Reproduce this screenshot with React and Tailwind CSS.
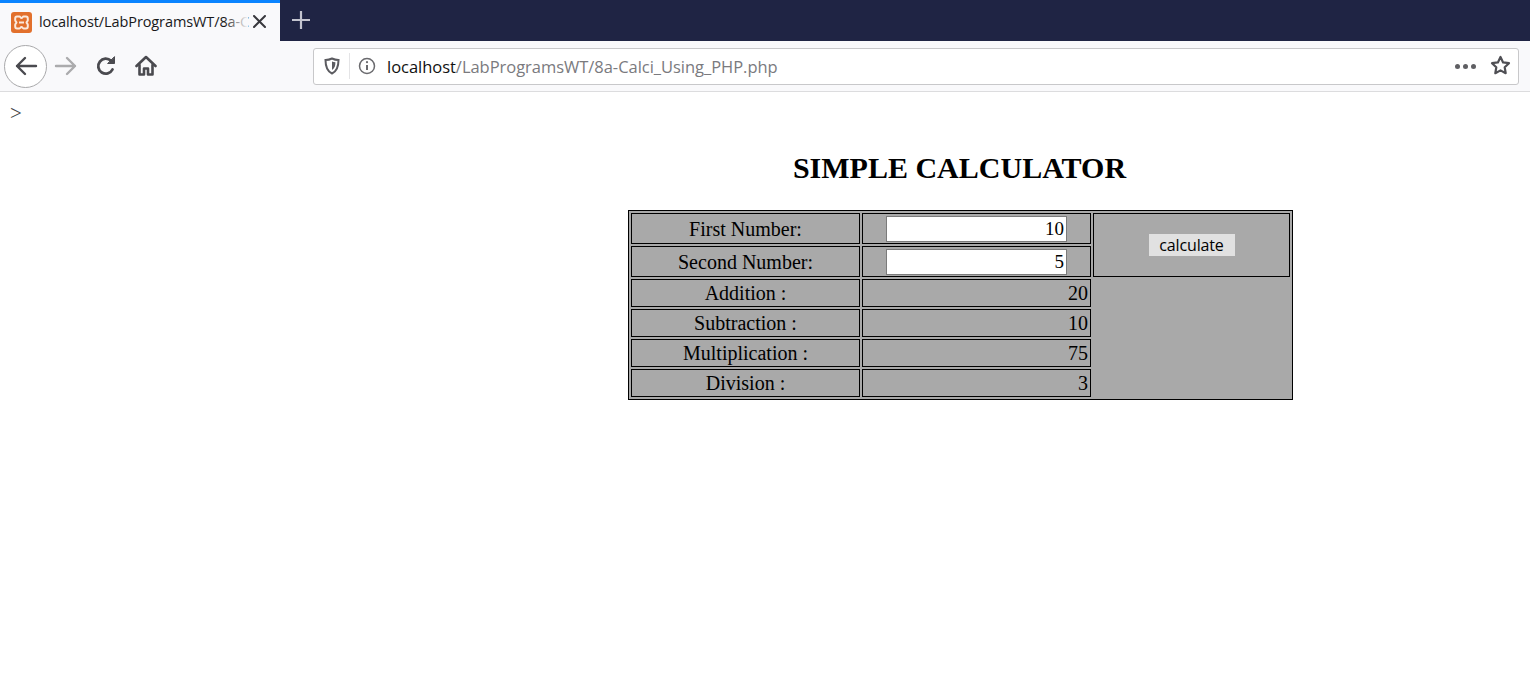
const rows = [
  ["Addition :", "20"],
  ["Subtraction :", "10"],
  ["Multiplication :", "75"],
  ["Division :", "3"],
];

function XamppLogo() {
  return (
    <svg width="21" height="21" viewBox="0 0 21 21">
      <rect x="0" y="0" width="21" height="21" rx="3" fill="#e2702c" />
      <path
        d="M6 4.500h2.500c.9 0 1 1.500 2 1.500s1.100-1.500 2-1.500H15c1.200 0 1.800 1 1.800 2.200v1.600c0 1-1.300 1.300-1.300 2.200s1.300 1.200 1.300 2.200v1.600c0 1.200-.6 2.200-1.800 2.200h-2.500c-.9 0-1-1.500-2-1.500s-1.100 1.500-2 1.500H6c-1.200 0-1.800-1-1.800-2.200v-1.600c0-1 1.300-1.300 1.300-2.200S4.200 9.300 4.200 8.300V6.700C4.200 5.500 4.800 4.500 6 4.500z"
        fill="none"
        stroke="#fbe9dc"
        strokeWidth="2"
      />
      <path d="M8 10.500h5" stroke="#fbe9dc" strokeWidth="2" />
    </svg>
  );
}

function ToolbarIcons() {
  return (
    <div className="flex items-center">
      <div className="ml-1 flex h-[43px] w-[43px] items-center justify-center rounded-full border border-[#a9a9ab] bg-white">
        <svg width="24" height="24" viewBox="0 0 24 24" fill="none" stroke="#4a4a4f" strokeWidth="2.400" strokeLinecap="round" strokeLinejoin="round">
          <path d="M22 12H3M11 4l-8 8 8 8" />
        </svg>
      </div>
      <svg className="ml-[7px]" width="24" height="24" viewBox="0 0 24 24" fill="none" stroke="#ababad" strokeWidth="2.400" strokeLinecap="round" strokeLinejoin="round">
        <path d="M2 12h19M13 4l8 8-8 8" />
      </svg>
      <svg className="ml-[17px]" width="22" height="22" viewBox="0 0 22 22" fill="none" stroke="#4a4a4f" strokeWidth="2.800" strokeLinecap="round">
        <path d="M17.500 14.500A7.500 7.500 0 1 1 16 5.800" />
        <path d="M19.500 2v6.500H13z" fill="#4a4a4f" strokeWidth="1" strokeLinejoin="round" />
      </svg>
      <svg className="ml-[18px]" width="22" height="22" viewBox="0 0 22 22" fill="none" stroke="#4a4a4f" strokeWidth="2.600" strokeLinejoin="round" strokeLinecap="round">
        <path d="M1.500 11 11 2l9.500 9" />
        <path d="M4.500 10v9.500h4.500v-6h4v6h4.500V10" />
      </svg>
    </div>
  );
}

function UrlBar() {
  return (
    <div className="ml-[156px] flex h-[37px] w-[1206px] items-center rounded-[3px] border border-[#c8c8ca] bg-white font-['Open_Sans',sans-serif]">
      <svg className="ml-[9px]" width="18" height="18" viewBox="0 0 18 18" fill="none" stroke="#5b5b60" strokeWidth="2">
        <path d="M9 1.500c2 1 4.300 1.500 6.500 1.500 0 6-1 11-6.500 13.500C3.500 14 2.500 9 2.500 3 4.700 3 7 2.500 9 1.500z" />
        <path d="M9 4.500c1 .4 2.200.7 3.400.8 0 3.500-.6 6-3.400 7.700z" fill="#5b5b60" stroke="none" />
      </svg>
      <div className="ml-[8px] h-[26px] w-px bg-[#e4e4e6]" />
      <svg className="ml-[8px]" width="18" height="18" viewBox="0 0 18 18" fill="none" stroke="#6a6a6e" strokeWidth="1.500">
        <circle cx="9" cy="9" r="7.500" />
        <path d="M9 8v5" strokeWidth="2" />
        <circle cx="9" cy="5.200" r="1.100" fill="#6a6a6e" stroke="none" />
      </svg>
      <div className="ml-[11px] whitespace-nowrap pt-[2px] text-[16.500px] tracking-[-0.03px] text-[#7a7a7e]">
        <span className="text-[#111]">localhost</span>/LabProgramsWT/8a-Calci_Using_PHP.php
      </div>
      <div className="ml-auto mr-[42px] flex gap-[3px]">
        <span className="h-[5px] w-[5px] rounded-full bg-[#5f5f63]" />
        <span className="h-[5px] w-[5px] rounded-full bg-[#5f5f63]" />
        <span className="h-[5px] w-[5px] rounded-full bg-[#5f5f63]" />
      </div>
      <svg className="absolute left-[1490px] top-[55px]" width="21" height="21" viewBox="0 0 21 21" fill="none" stroke="#4f4f54" strokeWidth="2.200" strokeLinejoin="round">
        <path d="m10.500 2 2.600 5.400 5.900.8-4.300 4.100 1 5.900-5.200-2.800-5.200 2.800 1-5.900L2 8.200l5.900-.8z" />
      </svg>
    </div>
  );
}

function LabelCell({ children }) {
  return <td className="border border-black text-center">{children}</td>;
}

function NumberInput({ value }) {
  return (
    <input
      readOnly
      value={value}
      className="mx-auto block h-[26px] w-[181px] border border-[#7b7b7b] bg-white pr-[2px] pt-[1px] text-right font-['Liberation_Serif',serif] text-[19px] text-black outline-none"
    />
  );
}

export default function App() {
  return (
    <div className="relative min-h-[684px] bg-white">
      <div className="flex h-[41px] bg-[#1f2444]">
        <div className="relative flex h-[41px] w-[280px] items-center border-t-[3px] border-[#0a84ff] bg-[#f9f9fb] pl-[11px] font-['Open_Sans',sans-serif]">
          <XamppLogo />
          <div className="relative ml-[7px] w-[209px] whitespace-nowrap text-[14.500px] tracking-[-0.1px] text-[#18181a]">
            localhost/LabProgramsWT/8a-C
            <div className="absolute inset-y-0 right-0 w-[24px] bg-gradient-to-r from-transparent to-[#f9f9fb]" />
          </div>
          <svg className="absolute left-[253px] top-[12px]" width="13" height="13" viewBox="0 0 13 13" stroke="#38383d" strokeWidth="2" strokeLinecap="round">
            <path d="M1 1l11 11M12 1 1 12" />
          </svg>
        </div>
        <svg className="ml-[12px] mt-[11px]" width="18" height="18" viewBox="0 0 18 18" stroke="#c3c4cf" strokeWidth="2.200">
          <path d="M9 0v18M0 9h18" />
        </svg>
      </div>

      <div className="flex h-[51px] items-center border-b border-[#dcdcde] bg-[#f9f9fb]">
        <ToolbarIcons />
        <UrlBar />
      </div>

      <div className="px-[10px] pt-[11px] font-['Liberation_Serif',serif] text-[21px] leading-[21px] text-[#444]">&gt;</div>

      <div className="flex flex-col items-center pl-[391px] font-['Liberation_Serif',serif] text-black">
        <h1 className="mr-[2px] mt-[26px] text-[30px] font-bold leading-[36px]">SIMPLE CALCULATOR</h1>
        <table className="mt-[24px] w-[665px] table-fixed border-separate border-spacing-[2px] border border-black bg-[#a9a9a9] text-[20px] leading-[24px]">
          <colgroup>
            <col className="w-[229px]" />
            <col className="w-[229px]" />
            <col />
          </colgroup>
          <tbody>
            <tr className="h-[31px]">
              <LabelCell>First Number:</LabelCell>
              <td className="border border-black"><NumberInput value="10" /></td>
              <td rowSpan={2} className="border border-black">
                <button className="mx-auto block h-[22px] w-[86px] bg-[#e1e1e1] font-['Open_Sans',sans-serif] text-[16px] leading-[22px] tracking-[-0.15px] text-black">calculate</button>
              </td>
            </tr>
            <tr className="h-[31px]">
              <LabelCell>Second Number:</LabelCell>
              <td className="border border-black"><NumberInput value="5" /></td>
            </tr>
            {rows.map(([label, result], i) => (
              <tr key={label} className="h-[28px]">
                <LabelCell>{label}</LabelCell>
                <td className="border border-black pr-[2px] text-right">{result}</td>
                {i === 0 && <td rowSpan={4} />}
              </tr>
            ))}
          </tbody>
        </table>
      </div>
    </div>
  );
}
